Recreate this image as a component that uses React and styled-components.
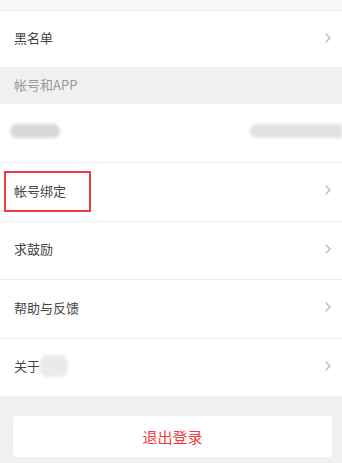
import styled, { createGlobalStyle } from "styled-components";

const GlobalStyle = createGlobalStyle`
  html, body {
    margin: 0;
    padding: 0;
    background: #f0f0f0;
  }
  body {
    font-family: "Noto Sans CJK SC", "Noto Sans", sans-serif;
    -webkit-font-smoothing: antialiased;
  }
`;

const menuItems = ["求鼓励", "帮助与反馈"];

const Chevron = () => (
  <StyledChevron width="6" height="10" viewBox="0 0 6 10">
    <polyline
      points="1,1 5,5 1,9"
      fill="none"
      stroke="#b5b5b5"
      strokeWidth="1.2"
      strokeLinecap="round"
      strokeLinejoin="round"
    />
  </StyledChevron>
);

const App = () => {
  return (
    <Page>
      <GlobalStyle />
      <TopStrip />
      <Row height={56}>
        <Label>黑名单</Label>
        <Chevron />
      </Row>
      <SectionHeader>帐号和APP</SectionHeader>
      <InfoRow>
        <Blur width={50} tone="#d4d4d4" />
        <Blur width={92} tone="#dedede" edge />
      </InfoRow>
      <Row>
        <Marked>帐号绑定</Marked>
        <Chevron />
      </Row>
      {menuItems.map((item) => (
        <Row key={item}>
          <Label>{item}</Label>
          <Chevron />
        </Row>
      ))}
      <Row last>
        <AboutWrap>
          <Label>关于</Label>
          <Blur width={28} height={22} tone="#e8e8e8" />
        </AboutWrap>
        <Chevron />
      </Row>
      <Footer>
        <LogoutButton>退出登录</LogoutButton>
      </Footer>
    </Page>
  );
};

const Page = styled.div`
  width: 342px;
  min-height: 463px;
  background: #f0f0f0;
  display: flex;
  flex-direction: column;
`;

const TopStrip = styled.div`
  height: 10px;
  background: #f7f7f7;
  border-bottom: 1px solid #ebebeb;
`;

const Row = styled.div`
  box-sizing: border-box;
  height: ${(p) => (p.height || 57.5) + (p.last ? 0 : 1)}px;
  background: #fff;
  border-bottom: ${(p) => (p.last ? "none" : "1px solid #eeeeee")};
  display: flex;
  align-items: center;
  justify-content: space-between;
  padding: 0 11px 3px 14px;
`;

const Label = styled.span`
  font-size: 13px;
  color: #444;
  line-height: 1;
`;

const Marked = styled(Label)`
  position: relative;

  &::after {
    content: "";
    position: absolute;
    left: -10px;
    top: -13px;
    width: 83px;
    height: 37px;
    border: 2px solid #ef3b3b;
  }
`;

const SectionHeader = styled.div`
  box-sizing: border-box;
  height: 36px;
  display: flex;
  align-items: center;
  padding: 0 0 4px 14px;
  font-size: 13px;
  color: #9a9a9a;
  background: #f0f0f0;
`;

const InfoRow = styled.div`
  box-sizing: border-box;
  height: 59px;
  background: #fff;
  border-bottom: 1px solid #eeeeee;
  display: flex;
  align-items: center;
  justify-content: space-between;
  padding: 0 0 4px 10px;
`;

const Blur = styled.div`
  width: ${(p) => p.width}px;
  height: ${(p) => p.height || 14}px;
  background: ${(p) => p.tone};
  border-radius: ${(p) => (p.edge ? "8px 0 0 8px" : "8px")};
  filter: blur(1.5px);
  opacity: 0.9;
`;

const AboutWrap = styled.div`
  display: flex;
  align-items: center;
`;

const StyledChevron = styled.svg`
  flex-shrink: 0;
`;

const Footer = styled.div`
  flex: 1;
  padding: 20px 10px 6px 13px;
`;

const LogoutButton = styled.div`
  height: 41px;
  background: #fff;
  border-radius: 2px;
  display: flex;
  align-items: center;
  justify-content: center;
  font-size: 15px;
  color: #ef3b3b;
`;

export default App;
